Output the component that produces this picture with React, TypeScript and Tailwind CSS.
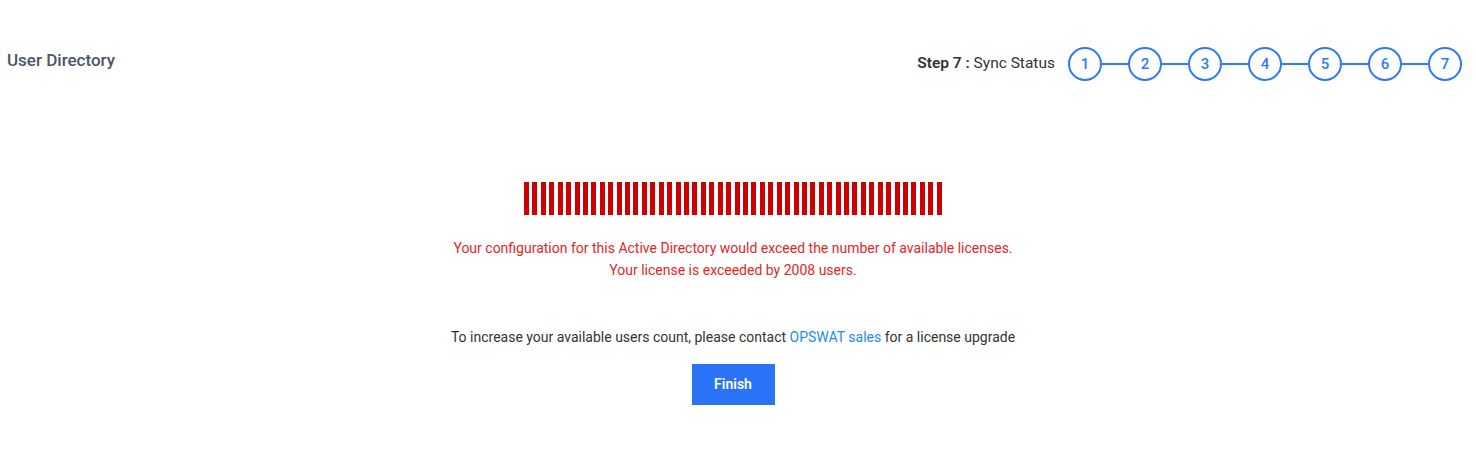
import React from 'react'

const STEPS = [1, 2, 3, 4, 5, 6, 7]
const BAR_COUNT = 50

const font = { fontFamily: 'Roboto, "Liberation Sans", sans-serif' }

function Stepper() {
  return (
    <div className="flex items-center">
      {STEPS.map((n, i) => (
        <React.Fragment key={n}>
          {i > 0 && <div className="h-[2px] w-[26px] bg-[#2f7bf5]" />}
          <div className="flex h-[34px] w-[34px] items-center justify-center rounded-full border-2 border-[#2f7bf5] text-[15px] font-medium text-[#2f7bf5]">
            {n}
          </div>
        </React.Fragment>
      ))}
    </div>
  )
}

export default function App() {
  return (
    <div className="h-[449px] w-full bg-white" style={font}>
      <div className="flex items-start justify-between pl-[7px] pr-[14px] pt-[47px]">
        <h1 className="pt-[1px] text-[17px] font-medium text-[#4a5568]">User Directory</h1>
        <div className="flex items-center gap-[13px]">
          <span className="text-[15.5px] text-[#333]">
            <span className="font-semibold">Step 7 :</span> Sync Status
          </span>
          <Stepper />
        </div>
      </div>

      <div className="flex flex-col items-center pr-[10px] pt-[101px]">
        <div className="flex h-[33px] w-[418px] justify-between">
          {Array.from({ length: BAR_COUNT }).map((_, i) => (
            <div key={i} className="h-full w-[5px] bg-[#cc0000]" />
          ))}
        </div>

        <div className="mt-[22px] text-center text-[14px] leading-[22px] text-[#e3261f]">
          <p>Your configuration for this Active Directory would exceed the number of available licenses.</p>
          <p>Your license is exceeded by 2008 users.</p>
        </div>

        <p className="mt-[45px] text-[14px] leading-[22px] text-[#333]">
          To increase your available users count, please contact{' '}
          <a className="text-[#1d8cf8]">OPSWAT sales</a> for a license upgrade
        </p>

        <button className="mt-[16px] h-[41px] w-[83px] bg-[#2a72f6] text-[14px] font-semibold text-white">
          Finish
        </button>
      </div>
    </div>
  )
}
